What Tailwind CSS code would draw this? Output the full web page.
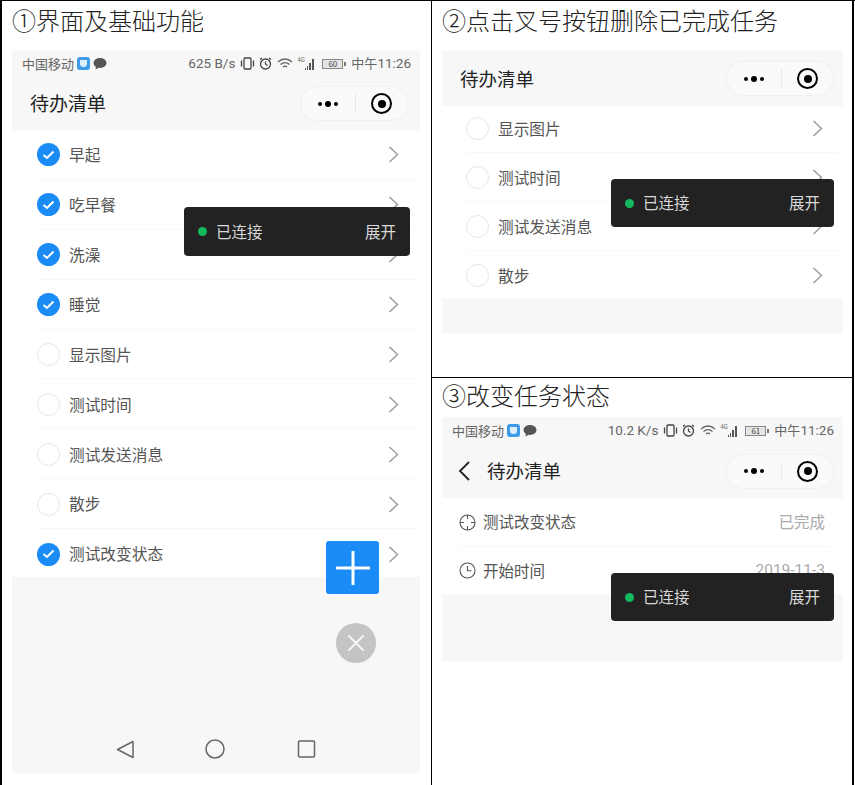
<!DOCTYPE html>
<html lang="zh-CN" class="bg-white text-black">

<head>
  <meta charset="UTF-8">
  <script src="https://cdn.jsdelivr.net/npm/@tailwindcss/browser@4"></script>
  <title>待办清单</title>
</head>

<body class="bg-white font-['Noto_Sans_CJK_SC','Noto_Sans',sans-serif]">
  <div class="w-[855px] h-[785px] flex overflow-hidden border-t border-black">
    <!-- panel 1 -->
    <section class="relative w-[432px] h-full border-l-2 border-r border-black shrink-0">
      <h2 class="h-[44px] pl-[10px] pt-[2px] text-[24px] leading-[34px] font-light text-[#222]">①界面及基础功能</h2>
      <div class="ml-[10px] w-[408px] h-[723px] mt-[5px] flex flex-col">
        <div class="h-[80px] bg-[#f7f7f7] shrink-0">
          <div data-status="625 B/s|60"></div>
          <div class="h-[53px] flex items-center justify-between pl-[18px] pr-[12px]">
            <span class="text-[19px] text-[#222]">待办清单</span>
            <div data-capsule></div>
          </div>
        </div>
        <ul class="h-[447px] shrink-0" data-rows="1早起,1吃早餐,1洗澡,1睡觉,0显示图片,0测试时间,0测试发送消息,0散步,1测试改变状态"></ul>
        <div class="flex-1 bg-[#f7f7f7] flex flex-col justify-end">
          <div class="h-[48px] flex items-center">
            <svg width="408" height="48" viewBox="0 0 408 48" fill="none" stroke="#666" stroke-width="1.5">
              <path d="M121 32.500v-16l-15.500 8z" stroke-linejoin="round" />
              <circle cx="203" cy="24" r="9" />
              <rect x="286.500" y="16" width="16" height="16" rx="1" />
            </svg>
          </div>
        </div>
      </div>
      <button class="absolute left-[324px] top-[540px] w-[53px] h-[53px] rounded-[3px] bg-[#1b8bf5] flex items-center justify-center">
        <svg width="34" height="34" viewBox="0 0 34 34" stroke="#fff" stroke-width="3" stroke-linecap="round"><path d="M17 1v32M1 17h32" /></svg>
      </button>
      <button class="absolute left-[334px] top-[622px] w-[40px] h-[40px] rounded-full bg-[#c4c4c4] flex items-center justify-center">
        <svg width="18" height="18" viewBox="0 0 18 18" stroke="#f4f4f4" stroke-width="2" stroke-linecap="round"><path d="M2 2l14 14M16 2L2 16" /></svg>
      </button>
      <div data-toast class="absolute left-[182px] top-[206px] w-[226px] h-[49px]"></div>
    </section>

    <div class="relative flex-1 h-full flex flex-col border-r-2 border-black mr-px">
      <!-- panel 2 -->
      <section class="relative h-[377px] border-b border-black shrink-0">
        <h2 class="h-[44px] pl-[10px] pt-[2px] text-[24px] leading-[34px] font-light text-[#222]">②点击叉号按钮删除已完成任务</h2>
        <div class="ml-[10px] w-[401px] mt-[6px]">
          <div class="h-[55px] bg-[#f7f7f7] flex items-center justify-between pl-[18px] pr-[9px]">
            <span class="text-[18.500px] text-[#222]">待办清单</span>
            <div data-capsule></div>
          </div>
          <ul class="h-[194px] -mt-[2px]" data-rows="0显示图片,0测试时间,0测试发送消息,0散步" data-compact></ul>
          <div class="h-[35px] bg-[#f7f7f7]"></div>
        </div>
        <div data-toast class="absolute left-[179px] top-[178px] w-[223px] h-[48px]"></div>
      </section>

      <!-- panel 3 -->
      <section class="relative flex-1">
        <h2 class="h-[39px] pl-[10px] text-[24px] leading-[34px] font-light text-[#222]">③改变任务状态</h2>
        <div class="ml-[10px] w-[401px]">
          <div class="h-[81px] bg-[#f7f7f7]">
            <div data-status="10.2 K/s|61"></div>
            <div class="h-[54px] flex items-center justify-between pl-[15px] pr-[9px]">
              <div class="flex items-center gap-[16px]">
                <svg width="14" height="22" viewBox="0 0 14 22" fill="none" stroke="#222" stroke-width="1.800"><path d="M12 2L3 11l9 9" /></svg>
                <span class="text-[18.500px] text-[#222]">待办清单</span>
              </div>
              <div data-capsule></div>
            </div>
          </div>
          <div class="h-[49px] ml-[17px] mr-[13px] pr-[5px] flex items-center justify-between border-b border-[#f7f7f7]">
            <div class="flex items-center gap-[7px] text-[15.500px] text-[#555]">
              <svg width="17" height="17" viewBox="0 0 17 17" fill="none" stroke="#555" stroke-width="1.100"><circle cx="8.500" cy="8.500" r="7.500" /><path d="M8.500 1v4M8.500 12v4M1 8.500h4M12 8.500h4" /></svg>
              测试改变状态
            </div>
            <span class="text-[15.500px] text-[#aaa]">已完成</span>
          </div>
          <div class="h-[47px] ml-[17px] mr-[13px] pr-[5px] flex items-center justify-between">
            <div class="flex items-center gap-[7px] text-[15.500px] text-[#555]">
              <svg width="17" height="17" viewBox="0 0 17 17" fill="none" stroke="#555" stroke-width="1.100"><circle cx="8.500" cy="8.500" r="7.500" /><path d="M8.500 4v4.800h4" /></svg>
              开始时间
            </div>
            <span class="text-[15.500px] text-[#aaa] font-['Roboto',sans-serif]">2019-11-3</span>
          </div>
          <div class="h-[67px] bg-[#f7f7f7]"></div>
        </div>
        <div data-toast class="absolute left-[179px] top-[195px] w-[223px] h-[48px]"></div>
      </section>
    </div>
  </div>

  <script>
    const chevron = `<svg class="shrink-0" width="11" height="17" viewBox="0 0 11 17" fill="none" stroke="#9a9a9a" stroke-width="1.400"><path d="M1.500 1l8 7.500-8 7.500" /></svg>`
    const check = `<span class="w-[23px] h-[23px] rounded-full bg-[#1b8bf5] flex items-center justify-center shrink-0"><svg width="13" height="10" viewBox="0 0 13 10" fill="none" stroke="#fff" stroke-width="2"><path d="M1.500 5l3.500 3 6.500-6.500" /></svg></span>`
    const empty = `<span class="w-[23px] h-[23px] rounded-full border border-[#e6e6e6] shrink-0"></span>`

    document.querySelectorAll('[data-rows]').forEach(list => {
      const compact = list.hasAttribute('data-compact')
      list.innerHTML = list.dataset.rows.split(',').map((row, i, all) => `
        <li class="${compact ? 'h-[49px] pl-[24px] pr-[20px] gap-[9px]' : 'h-[49.900px] pl-[25px] pr-[21px] gap-[9px]'} flex items-center text-[15.700px] text-[#555] relative">
          ${row[0] === '1' ? check : empty}
          <span class="flex-1">${row.slice(1)}</span>
          ${chevron}
          ${i < all.length - 1 ? '<span class="absolute left-[24px] right-[4px] bottom-0 h-px bg-[#f8f8f8]"></span>' : ''}
        </li>`).join('')
    })

    document.querySelectorAll('[data-capsule]').forEach(el => {
      el.className = 'w-[108px] h-[35px] rounded-full bg-[#fafafa] border border-[#f0f0f0] flex items-center'
      el.innerHTML = `
        <div class="w-[54px] h-full flex items-center justify-center gap-[3px]">
          <span class="w-[4px] h-[4px] rounded-full bg-black"></span>
          <span class="w-[6px] h-[6px] rounded-full bg-black"></span>
          <span class="w-[4px] h-[4px] rounded-full bg-black"></span>
        </div>
        <span class="w-px h-[19px] bg-[#e8e8e8]"></span>
        <div class="flex-1 h-full flex items-center justify-center">
          <span class="w-[21px] h-[21px] rounded-full border-[2.500px] border-black flex items-center justify-center"><span class="w-[8px] h-[8px] rounded-full bg-black"></span></span>
        </div>`
    })

    document.querySelectorAll('[data-toast]').forEach(el => {
      el.classList.add('rounded-[4px]', 'bg-[#222222]', 'flex', 'items-center', 'pl-[14px]', 'pr-[14px]', 'text-[15.500px]', 'text-[#d8d8d8]')
      el.innerHTML = `
        <span class="w-[9px] h-[9px] rounded-full bg-[#13b85f] mr-[9px] shrink-0"></span>
        <span class="flex-1">已连接</span>
        <span>展开</span>`
    })

    document.querySelectorAll('[data-status]').forEach(el => {
      const [speed, battery] = el.dataset.status.split('|')
      el.className = 'h-[27px] flex items-center justify-between pl-[10px] pr-[9px] text-[13px] text-[#666]'
      el.innerHTML = `
        <div class="flex items-center gap-[3px]">
          <span>中国移动</span>
          <span class="w-[13px] h-[13px] rounded-[3px] bg-[#3d9be9] flex items-center justify-center"><span class="w-[7px] h-[7px] rounded-b-full bg-[#dff0fc]"></span></span>
          <svg width="14" height="13" viewBox="0 0 14 13" fill="#555"><ellipse cx="7" cy="6" rx="6.500" ry="5" /><path d="M3 9l-.5 3.500L6 10.500z" /></svg>
        </div>
        <div class="flex items-center gap-[4.500px]">
          <span class="font-['Roboto',sans-serif] text-[13.500px]">${speed}</span>
          <svg width="15" height="13" viewBox="0 0 15 13" fill="none" stroke="#444" stroke-width="1.300"><rect x="4" y="1" width="7" height="11" rx="1" /><path d="M1.500 3.500v6M13.500 3.500v6" /></svg>
          <svg width="13" height="13" viewBox="0 0 13 13" fill="none" stroke="#444" stroke-width="1.300"><circle cx="6.500" cy="7" r="5" /><path d="M6.500 4.500V7l2 1.500M1 2.500L3 1M12 2.500L10 1" /></svg>
          <svg width="16" height="13" viewBox="0 0 16 13" fill="none" stroke="#666" stroke-width="1.300"><path d="M1 5c4-4 10-4 14 0M3.500 7.500c2.500-2.500 6.500-2.500 9 0M6 10c1-1 3-1 4 0" /></svg>
          <span class="flex items-end gap-px h-[13px]">
            <span class="text-[6px] leading-[6px] self-start -mr-[1px]">4G</span>
            <span class="w-px h-[2px] bg-[#555]"></span><span class="w-px h-[4px] bg-[#555]"></span><span class="w-[2px] h-[7px] bg-[#555]"></span><span class="w-[2px] h-[11px] bg-[#555]"></span>
          </span>
          <span class="ml-[4px] w-[21px] h-[10px] border border-[#888] bg-[#e4e4e4] text-[8px] leading-[8px] text-center text-[#444]">${battery}</span>
          <span class="-ml-[4px] w-[2px] h-[4px] bg-[#777]"></span>
          <span class="ml-[1px]">中午<span class="font-['Roboto',sans-serif] text-[13.500px]">11:26</span></span>
        </div>`
    })
  </script>
</body>

</html>
